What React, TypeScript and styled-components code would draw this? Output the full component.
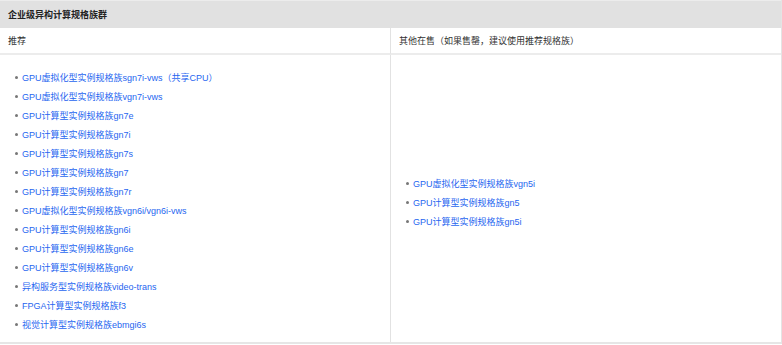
import React from "react";
import styled, { createGlobalStyle } from "styled-components";

const Global = createGlobalStyle`
  html, body { margin: 0; padding: 0; background: #fff; }
  body { font-family: "Liberation Sans", "Noto Sans CJK SC", sans-serif; }
`;

const Table = styled.div`
  width: 782px;
  height: 344px;
  box-sizing: border-box;
  border-right: 1px solid #e4e4e4;
  border-bottom: 2px solid #e6e6e6;
  display: grid;
  grid-template-columns: 390px 1fr;
  grid-template-rows: 28px 27px 1fr;
  font-size: 9px;
  color: #333;
`;

const Caption = styled.div`
  grid-column: 1 / span 2;
  background: #e1e1e1;
  border-top: 1px solid #ececec;
  display: flex;
  align-items: center;
  padding-left: 8px;
  font-weight: bold;
  color: #222;
`;

const HeadCell = styled.div<{ $right?: boolean }>`
  display: flex;
  align-items: center;
  padding-left: 8px;
  border-bottom: 2px solid #ececec;
  border-left: ${(p) => (p.$right ? "1px solid #e2e2e2" : "none")};
  color: #333;
`;

const BodyCell = styled.div<{ $right?: boolean }>`
  display: flex;
  flex-direction: column;
  justify-content: ${(p) => (p.$right ? "center" : "flex-start")};
  padding: ${(p) => (p.$right ? "8px 8px 0 15px" : "13px 8px 0 15px")};
  border-left: ${(p) => (p.$right ? "1px solid #e2e2e2" : "none")};
`;

const List = styled.ul`
  list-style: none;
  margin: 0;
  padding: 0;
`;

const Item = styled.li`
  height: 19px;
  display: flex;
  align-items: center;
  gap: 4px;
  &::before {
    content: "";
    width: 3px;
    height: 3px;
    border-radius: 50%;
    background: #777;
    flex: none;
  }
`;

const Link = styled.a`
  color: #1f66f0;
  text-decoration: none;
`;

const left = [
  "GPU虚拟化型实例规格族sgn7i-vws（共享CPU）",
  "GPU虚拟化型实例规格族vgn7i-vws",
  "GPU计算型实例规格族gn7e",
  "GPU计算型实例规格族gn7i",
  "GPU计算型实例规格族gn7s",
  "GPU计算型实例规格族gn7",
  "GPU计算型实例规格族gn7r",
  "GPU虚拟化型实例规格族vgn6i/vgn6i-vws",
  "GPU计算型实例规格族gn6i",
  "GPU计算型实例规格族gn6e",
  "GPU计算型实例规格族gn6v",
  "异构服务型实例规格族video-trans",
  "FPGA计算型实例规格族f3",
  "视觉计算型实例规格族ebmgi6s",
];

const right = [
  "GPU虚拟化型实例规格族vgn5i",
  "GPU计算型实例规格族gn5",
  "GPU计算型实例规格族gn5i",
];

export default function App() {
  return (
    <>
      <Global />
      <Table>
        <Caption>企业级异构计算规格族群</Caption>
        <HeadCell>推荐</HeadCell>
        <HeadCell $right>其他在售（如果售罄，建议使用推荐规格族）</HeadCell>
        <BodyCell>
          <List>
            {left.map((t) => (
              <Item key={t}>
                <Link href="#">{t}</Link>
              </Item>
            ))}
          </List>
        </BodyCell>
        <BodyCell $right>
          <List>
            {right.map((t) => (
              <Item key={t}>
                <Link href="#">{t}</Link>
              </Item>
            ))}
          </List>
        </BodyCell>
      </Table>
    </>
  );
}
